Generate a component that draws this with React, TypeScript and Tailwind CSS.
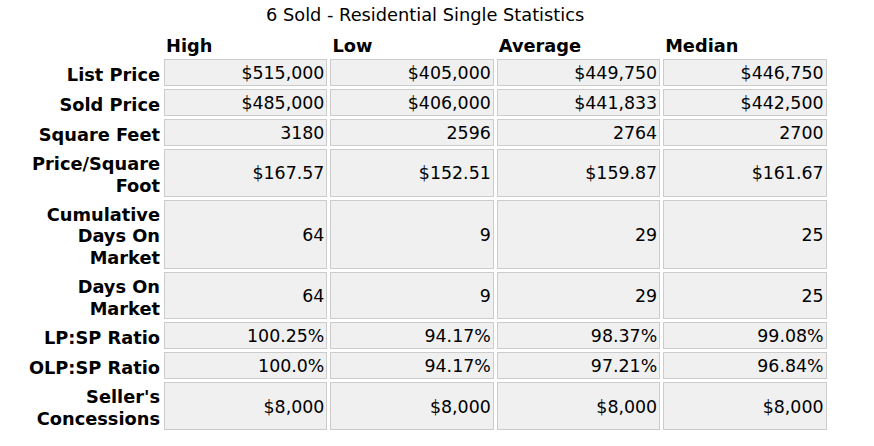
import React from "react";

type Row = { label: string[]; values: string[] };

const rows: Row[] = [
  { label: ["List Price"], values: ["$515,000", "$405,000", "$449,750", "$446,750"] },
  { label: ["Sold Price"], values: ["$485,000", "$406,000", "$441,833", "$442,500"] },
  { label: ["Square Feet"], values: ["3180", "2596", "2764", "2700"] },
  { label: ["Price/Square", "Foot"], values: ["$167.57", "$152.51", "$159.87", "$161.67"] },
  { label: ["Cumulative", "Days On", "Market"], values: ["64", "9", "29", "25"] },
  { label: ["Days On", "Market"], values: ["64", "9", "29", "25"] },
  { label: ["LP:SP Ratio"], values: ["100.25%", "94.17%", "98.37%", "99.08%"] },
  { label: ["OLP:SP Ratio"], values: ["100.0%", "94.17%", "97.21%", "96.84%"] },
  { label: ["Seller's", "Concessions"], values: ["$8,000", "$8,000", "$8,000", "$8,000"] },
];

const headers = ["High", "Low", "Average", "Median"];

export default function App() {
  return (
    <div className="w-[874px] h-[446px] bg-white text-black font-['DejaVu_Sans',Verdana,sans-serif]">
      <div className="pt-[4px] pl-[266px] whitespace-nowrap text-[17.8px] leading-[21px]">
        6 Sold - Residential Single Statistics
      </div>
      <div className="mt-[10px] ml-[37px] grid grid-cols-[124px_163.4px_163.4px_163.4px_163.4px] gap-[3px]">
        <div />
        {headers.map((h) => (
          <div key={h} className="pl-[2px] text-left font-bold text-[17.8px] leading-[21px]">
            {h}
          </div>
        ))}
        {rows.map((r) => (
          <React.Fragment key={r.label.join(" ")}>
            <div className="flex flex-col items-end justify-center pt-[4px] pr-[1px] text-right font-bold text-[17.8px] leading-[21.75px]">
              {r.label.map((l, i) => (
                <div key={i} className="whitespace-nowrap">
                  {l}
                </div>
              ))}
            </div>
            {r.values.map((v, i) => (
              <div
                key={i}
                className="flex items-center justify-end border border-[#cccccc] bg-[#f0f0f0] pt-[3px] pb-[1px] pr-[2px] text-[17.4px] leading-[21px] whitespace-nowrap"
              >
                {v}
              </div>
            ))}
          </React.Fragment>
        ))}
      </div>
    </div>
  );
}
